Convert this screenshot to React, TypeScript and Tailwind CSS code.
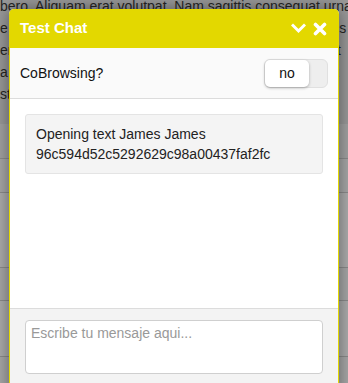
import { useState } from 'react';

const LOREM_LINES = [
  'bero. Aliquam erat volutpat. Nam sagittis consequat urna',
  'e ut lacus aliquet pretium. Maecenas ultrices lectus quis',
  'er in magna. Curabitur porta nisl sed lorem porta, ut ort',
  'a elit, in facilisis sem. Integer a ligula mauris. Vivamunt',
  'sti eget lectus. Pellentesque habitant morbi tristique et',
];

function ChevronDown() {
  return (
    <svg width="15" height="11" viewBox="0 0 15 11" fill="none">
      <path d="M2 2.5 L7.5 8 L13 2.5" stroke="white" strokeWidth="3" strokeLinecap="square" />
    </svg>
  );
}

function CloseIcon() {
  return (
    <svg width="14" height="14" viewBox="0 0 14 14" fill="none">
      <path d="M2.5 2.5 L11.5 11.5 M11.5 2.5 L2.5 11.5" stroke="white" strokeWidth="3.6" strokeLinecap="round" />
    </svg>
  );
}

export default function App() {
  const [cobrowse, setCobrowse] = useState(false);
  const [msg, setMsg] = useState('');

  return (
    <div
      className="relative h-[383px] w-[348px] overflow-hidden bg-[#a9a9a9]"
      style={{ fontFamily: '"Liberation Sans", Arial, Helvetica, sans-serif' }}
    >
      {/* dimmed page behind the chat */}
      <div className="bg-[#9a9a9a] h-[129px]">
        <div className="-mt-[5px] text-[14px] leading-[22px] text-[#262626] whitespace-nowrap">
          {LOREM_LINES.map(l => (
            <div key={l}>{l}</div>
          ))}
        </div>
      </div>
      <div className="flex flex-col">
        <div className="h-[35px] border-b border-[#8c8c8c] bg-[#a3a3a3]" />
        <div className="h-[34px] border-b border-[#8c8c8c] bg-[#a8a8a8]" />
        <div className="h-[75px] border-b border-[#8c8c8c] bg-[#adadad]" />
        <div className="h-[33px] border-b border-[#8c8c8c] bg-[#a8a8a8]" />
        <div className="h-[56px] border-b border-[#8c8c8c] bg-[#adadad]" />
      </div>

      {/* chat window */}
      <div className="absolute left-[9px] top-[9px] w-[330px] h-[390px] flex flex-col rounded-t-[5px] bg-white shadow-[0_0_18px_rgba(0,0,0,0.45)]">
        <div className="h-[39px] flex items-center justify-between pl-[11px] pr-[12px] bg-[#e3d800] rounded-t-[5px]">
          <span className="text-[15px] font-bold text-white">Test Chat</span>
          <div className="flex items-center gap-[7px]">
            <ChevronDown />
            <CloseIcon />
          </div>
        </div>

        <div className="flex flex-1 flex-col border-x border-[#e3d800]">
          <div className="h-[51px] flex items-center justify-between px-[10px] bg-[#fafafa] border-b border-[#dcdcdc]">
            <span className="text-[14px] text-[#111]">CoBrowsing?</span>
            <button
              onClick={() => setCobrowse(!cobrowse)}
              className="w-[64px] h-[29px] rounded-[6px] border border-[#e0e0e0] bg-[#eeeeee] flex items-center p-0"
            >
              <span className="w-[44px] h-[27px] rounded-[5px] bg-white shadow-[0_1px_3px_rgba(0,0,0,0.3)] flex items-center justify-center text-[14px] text-[#111]">
                {cobrowse ? 'sí' : 'no'}
              </span>
            </button>
          </div>

          <div className="h-[209px] bg-white px-[15px] pt-[15px]">
            <div className="rounded-[3px] border border-[#e4e4e4] bg-[#f4f4f4] px-[10px] py-[9px] text-[14px] leading-[20px] text-[#222]">
              Opening text James James
              <br />
              96c594d52c5292629c98a00437faf2fc
            </div>
          </div>

          <div className="flex-1 border-t border-[#dcdcdc] bg-[#f3f3f3] px-[15px] pt-[11px]">
            <textarea
              value={msg}
              onChange={e => setMsg(e.target.value)}
              placeholder="Escribe tu mensaje aqui..."
              className="block w-full h-[54px] resize-none rounded-[4px] border border-[#cfcfcf] bg-white px-[5px] py-[2px] text-[14px] leading-[20px] text-[#333] placeholder-[#999] focus:outline-none"
            />
          </div>
        </div>
      </div>
    </div>
  );
}
